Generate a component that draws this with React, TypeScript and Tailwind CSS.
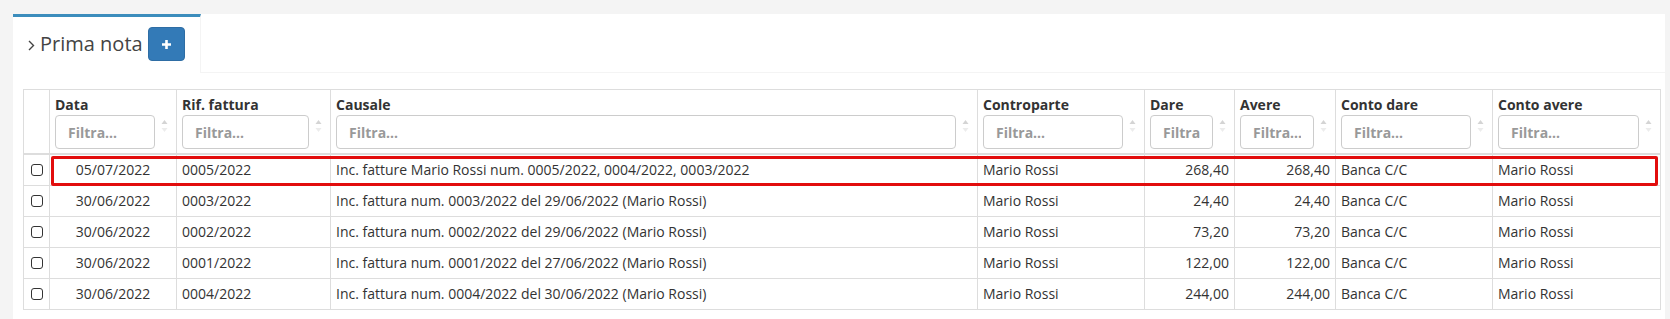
import React from "react";

type Row = {
  data: string;
  rif: string;
  causale: string;
  contro: string;
  dare: string;
  avere: string;
  contoDare: string;
  contoAvere: string;
};

const rows: Row[] = [
  { data: "05/07/2022", rif: "0005/2022", causale: "Inc. fatture Mario Rossi num. 0005/2022, 0004/2022, 0003/2022", contro: "Mario Rossi", dare: "268,40", avere: "268,40", contoDare: "Banca C/C", contoAvere: "Mario Rossi" },
  { data: "30/06/2022", rif: "0003/2022", causale: "Inc. fattura num. 0003/2022 del 29/06/2022 (Mario Rossi)", contro: "Mario Rossi", dare: "24,40", avere: "24,40", contoDare: "Banca C/C", contoAvere: "Mario Rossi" },
  { data: "30/06/2022", rif: "0002/2022", causale: "Inc. fattura num. 0002/2022 del 29/06/2022 (Mario Rossi)", contro: "Mario Rossi", dare: "73,20", avere: "73,20", contoDare: "Banca C/C", contoAvere: "Mario Rossi" },
  { data: "30/06/2022", rif: "0001/2022", causale: "Inc. fattura num. 0001/2022 del 27/06/2022 (Mario Rossi)", contro: "Mario Rossi", dare: "122,00", avere: "122,00", contoDare: "Banca C/C", contoAvere: "Mario Rossi" },
  { data: "30/06/2022", rif: "0004/2022", causale: "Inc. fattura num. 0004/2022 del 30/06/2022 (Mario Rossi)", contro: "Mario Rossi", dare: "244,00", avere: "244,00", contoDare: "Banca C/C", contoAvere: "Mario Rossi" },
];

const headers = ["Data", "Rif. fattura", "Causale", "Controparte", "Dare", "Avere", "Conto dare", "Conto avere"];
const widths = [127, 154, 647, 167, 90, 101, 157, 168];

function SortIcon() {
  return (
    <svg width="7" height="14" viewBox="0 0 7 14" className="block">
      <path d="M3.5 1 L6.5 5 L0.5 5 Z" fill="#d4d4d4" />
      <path d="M3.5 13 L6.5 9 L0.5 9 Z" fill="#ececec" />
    </svg>
  );
}

function Checkbox() {
  return <div className="mx-auto w-[12px] h-[12px] rounded-[3px] border border-[#333] bg-white" />;
}

export default function App() {
  return (
    <div
      className="min-h-[319px] bg-[#f4f4f4] pl-[13px] pr-[5px] pt-[14px] text-[#333]"
      style={{ fontFamily: '"Open Sans", "Noto Sans", sans-serif' }}
    >
      <div className="bg-white pb-[10px]">
        {/* nav tabs */}
        <div className="flex h-[59px]">
          <div className="flex h-[59px] items-center whitespace-nowrap border-t-[3px] border-r border-t-[#3c8dbc] border-r-[#f4f4f4] pl-[15px] pr-[15px] pb-[2px]">
            <svg width="7" height="11" viewBox="0 0 7 11" className="mr-[5px] mt-[2px] shrink-0">
              <path d="M1 1 L5.5 5.5 L1 10" fill="none" stroke="#444" strokeWidth="1.4" />
            </svg>
            <span className="text-[20px] leading-[28px] text-[#444]">Prima nota</span>
            <button className="ml-[5px] flex h-[34px] w-[37px] shrink-0 items-center justify-center rounded-[4px] border border-[#2e6da4] bg-[#337ab7]">
              <svg width="11" height="11" viewBox="0 0 11 11">
                <path d="M5.5 1 V10 M1 5.5 H10" stroke="#fff" strokeWidth="2.6" />
              </svg>
            </button>
          </div>
          <div className="flex-1 border-b border-[#f4f4f4]" />
        </div>

        {/* content */}
        <div className="px-[10px] pt-[16px]">
          <div className="relative w-[1637px]">
            <table className="w-[1637px] table-fixed border-collapse text-[14px] leading-[20px]">
              <colgroup>
                <col style={{ width: 26 }} />
                {widths.map((w, i) => (
                  <col key={i} style={{ width: w }} />
                ))}
              </colgroup>
              <thead>
                <tr>
                  <th className="border border-b-2 border-[#ddd]" />
                  {headers.map((h) => (
                    <th key={h} className="border border-b-2 border-[#ddd] pl-[5px] pr-0 pt-[5px] pb-[4px] text-left align-bottom font-bold text-[#333]">
                      <div className="whitespace-nowrap">{h}</div>
                      <div className="flex items-start">
                        <input
                          placeholder="Filtra..."
                          className="h-[34px] min-w-0 flex-1 rounded-[4px] border border-[#ccc] bg-white px-[12px] text-[14px] text-[#555] placeholder:text-[#999] outline-none"
                        />
                        <div className="w-[21px] pl-[6px] pt-[4px]">
                          <SortIcon />
                        </div>
                      </div>
                    </th>
                  ))}
                </tr>
              </thead>
              <tbody>
                {rows.map((r, i) => (
                  <tr key={i}>
                    <td className="border border-[#ddd] px-0 py-[5px]">
                      <Checkbox />
                    </td>
                    <td className="border border-[#ddd] px-[5px] py-[5px] text-center whitespace-nowrap">{r.data}</td>
                    <td className="border border-[#ddd] px-[5px] py-[5px] whitespace-nowrap">{r.rif}</td>
                    <td className="border border-[#ddd] px-[5px] py-[5px] whitespace-nowrap">{r.causale}</td>
                    <td className="border border-[#ddd] px-[5px] py-[5px] whitespace-nowrap">{r.contro}</td>
                    <td className="border border-[#ddd] px-[5px] py-[5px] text-right whitespace-nowrap">{r.dare}</td>
                    <td className="border border-[#ddd] px-[5px] py-[5px] text-right whitespace-nowrap">{r.avere}</td>
                    <td className="border border-[#ddd] px-[5px] py-[5px] whitespace-nowrap">{r.contoDare}</td>
                    <td className="border border-[#ddd] px-[5px] py-[5px] whitespace-nowrap">{r.contoAvere}</td>
                  </tr>
                ))}
              </tbody>
            </table>
            {/* highlight annotation */}
            <div className="pointer-events-none absolute left-[28px] top-[67px] h-[30px] w-[1607px] rounded-[2px] border-[3px] border-[#e20d0d]" />
          </div>
        </div>
      </div>
    </div>
  );
}
